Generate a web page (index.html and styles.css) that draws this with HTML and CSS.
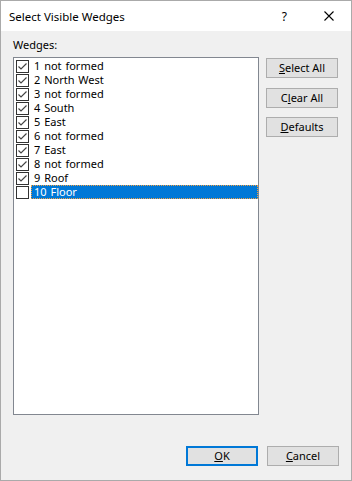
FILE: index.html
```html
<!DOCTYPE html>
<html>
<head>
  <link rel="stylesheet" href="styles.css">
</head>
<body>
  <div class="window">
    <div class="titlebar">
      <span class="title">Select Visible Wedges</span>
      <span class="help">?</span>
      <svg class="close" width="10" height="10" viewBox="0 0 10 10">
        <path d="M0.5 0.5 L9.5 9.5 M9.5 0.5 L0.5 9.5" stroke="#000" stroke-width="1.1" fill="none"/>
      </svg>
    </div>

    <div class="dialog">
      <div class="label">Wedges:</div>
      <div class="main">
        <div class="listbox">
          <div class="row"><span class="box on"></span><span class="text">1 not formed</span></div>
          <div class="row"><span class="box on"></span><span class="text">2 North West</span></div>
          <div class="row"><span class="box on"></span><span class="text">3 not formed</span></div>
          <div class="row"><span class="box on"></span><span class="text">4 South</span></div>
          <div class="row"><span class="box on"></span><span class="text">5 East</span></div>
          <div class="row"><span class="box on"></span><span class="text">6 not formed</span></div>
          <div class="row"><span class="box on"></span><span class="text">7 East</span></div>
          <div class="row"><span class="box on"></span><span class="text">8 not formed</span></div>
          <div class="row"><span class="box on"></span><span class="text">9 Roof</span></div>
          <div class="row"><span class="box"></span><span class="text selected">10 Floor</span></div>
        </div>
        <div class="side">
          <button class="btn btn-select"><u>S</u>elect All</button>
          <button class="btn btn-clear">C<u>l</u>ear All</button>
          <button class="btn btn-defaults"><u>D</u>efaults</button>
        </div>
      </div>
      <div class="footer">
        <button class="btn default"><u>O</u>K</button>
        <button class="btn"><u>C</u>ancel</button>
      </div>
    </div>
  </div>
</body>
</html>
```

FILE: styles.css
```css
/* Ventana de diálogo estilo Windows 10 */
html, body {
  margin: 0;
  padding: 0;
}

body {
  font-family: "Noto Sans", "Open Sans", sans-serif;
  font-size: 11px;
  color: #000;
  background: #fff;
}

.window {
  width: 352px;
  height: 481px;
  box-sizing: border-box;
  border: 1px solid #aaaaaa;
  background: #f0f0f0;
  display: flex;
  flex-direction: column;
}

.titlebar {
  height: 30px;
  background: #fff;
  display: flex;
  align-items: center;
  flex-shrink: 0;
}

.title {
  margin-left: 8px;
  flex: 1;
  font-size: 11.5px;
}

.help {
  margin-right: 37px;
  font-size: 12px;
}

.close {
  margin-right: 17px;
}

.dialog {
  flex: 1;
  padding: 6px 12px 0 12px;
  display: flex;
  flex-direction: column;
}

.label {
  line-height: 15px;
  height: 15px;
  margin-bottom: 5px;
}

.main {
  display: flex;
  gap: 7px;
}

.listbox {
  width: 246px;
  height: 358px;
  box-sizing: border-box;
  border: 1px solid #828790;
  background: #fff;
  padding: 1px 0 0 2px;
}

.row {
  height: 14px;
  display: flex;
  align-items: center;
}

.box {
  width: 13px;
  height: 13px;
  box-sizing: border-box;
  border: 1px solid #333;
  background: #fff;
  flex-shrink: 0;
}

.box.on {
  background: #fff url("data:image/svg+xml,%3Csvg xmlns='http://www.w3.org/2000/svg' width='11' height='11'%3E%3Cpath d='M1.5 5.5 L4 8 L9.5 2.5' stroke='%23444' stroke-width='1.2' fill='none'/%3E%3C/svg%3E") no-repeat center;
}

.text {
  margin-left: 2px;
  padding: 0 3px;
  height: 14px;
  line-height: 14px;
  flex: 1;
  box-sizing: border-box;
  white-space: nowrap;
  word-spacing: 1px;
}

.text.selected {
  background: #0078d7;
  color: #fff;
  border: 1px dotted #f4a040;
  line-height: 12px;
  padding: 0 2px;
}

.side {
  display: flex;
  flex-direction: column;
  padding-top: 1px;
}

.btn {
  width: 72px;
  height: 20px;
  box-sizing: border-box;
  border: 1px solid #adadad;
  background: #e1e1e1;
  font-family: inherit;
  font-size: 11px;
  color: #000;
  padding: 0;
  line-height: 16px;
}

.btn-clear {
  margin-top: 10px;
}

.btn-defaults {
  margin-top: 9px;
}

.btn.default {
  border: 2px solid #0078d7;
}

.footer {
  display: flex;
  justify-content: flex-end;
  gap: 9px;
  margin-top: 31px;
}
```
